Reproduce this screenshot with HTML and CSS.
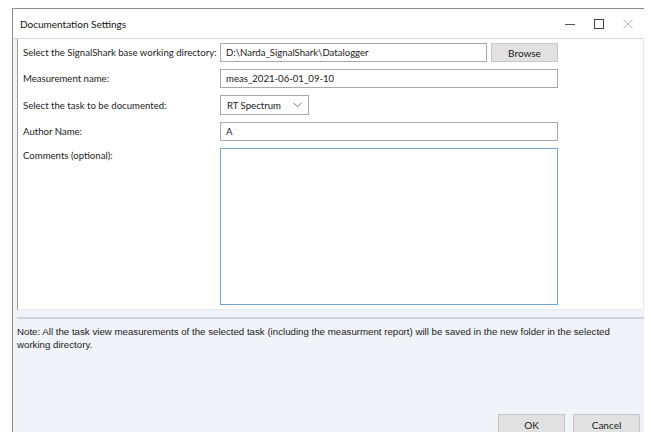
FILE: index.html
```html
<!DOCTYPE html>
<html>
<head>
<meta charset="utf-8">
<link rel="stylesheet" href="styles.css">
</head>
<body>
<div class="window">
  <div class="titlebar">
    <span class="title">Documentation Settings</span>
    <div class="controls">
      <span class="ctl min"><svg width="10" height="10" viewBox="0 0 10 10"><path d="M0 5.5h10" stroke="#555" stroke-width="1"/></svg></span>
      <span class="ctl max"><svg width="10" height="10" viewBox="0 0 10 10"><rect x="0.5" y="0.5" width="9" height="9" fill="none" stroke="#444" stroke-width="1"/></svg></span>
      <span class="ctl close"><svg width="10" height="10" viewBox="0 0 10 10"><path d="M0.5 0.5l9 9M9.5 0.5l-9 9" stroke="#b8b8b8" stroke-width="1"/></svg></span>
    </div>
  </div>
  <div class="panel">
    <div class="form">
      <label class="lbl">Select the SignalShark base working directory:</label>
      <div class="row">
        <div class="input path">D:\Narda_SignalShark\Datalogger</div>
        <button class="btn browse">Browse</button>
      </div>
      <label class="lbl">Measurement name:</label>
      <div class="input full">meas_2021-06-01_09-10</div>
      <label class="lbl">Select the task to be documented:</label>
      <div class="select">RT Spectrum<svg class="chev" width="9" height="6" viewBox="0 0 9 6"><path d="M0.5 0.8l4 4 4-4" fill="none" stroke="#777" stroke-width="1"/></svg></div>
      <label class="lbl">Author Name:</label>
      <div class="input full">A</div>
      <label class="lbl top">Comments (optional):</label>
      <div class="textarea"></div>
    </div>
  </div>
  <div class="footer">
    <p class="note">Note: All the task view measurements of the selected task (including the measurment report) will be saved in the new folder in the selected working directory.</p>
    <div class="actions">
      <button class="btn ok">OK</button>
      <button class="btn cancel">Cancel</button>
    </div>
  </div>
</div>
</body>
</html>
```
FILE: styles.css
```css
html, body {
  margin: 0;
  padding: 0;
  background: #ffffff;
  height: 100%;
  overflow: hidden;
}

.window {
  margin: 8px 0 0 12px;
  width: 631px;
  height: 424px;
  border-top: 1px solid #8c8c8c;
  border-left: 1px solid #8c8c8c;
  background: #f0f3f8;
  display: flex;
  flex-direction: column;
  font-family: "Lato", "Open Sans", sans-serif;
  color: #1a1a1a;
}

.titlebar {
  height: 29px;
  background: #ffffff;
  display: flex;
  align-items: center;
  justify-content: space-between;
  padding-left: 7px;
  border-bottom: 1px solid #d6d6d6;
}

.title {
  font-size: 10px;
  color: #111;
}

.controls {
  display: flex;
  align-items: center;
  gap: 19px;
  padding-right: 11px;
}

.ctl {
  display: flex;
  width: 10px;
  height: 10px;
}

.panel {
  margin-left: 4px;
  background: #ffffff;
  border-left: 1px solid #9a9a9a;
  border-right: 1px solid #e4e4e4;
  border-bottom: 1px solid #e8e8e8;
  height: 266px;
  padding: 4px 0 0 5px;
}

.form {
  display: grid;
  grid-template-columns: 197px 338px;
  row-gap: 7px;
  align-items: center;
  font-size: 9.6px;
}

.lbl {
  color: #222;
  white-space: nowrap;
}

.lbl.top {
  align-self: start;
  padding-top: 2px;
}

.row {
  display: flex;
  gap: 4px;
}

.input {
  height: 19px;
  box-sizing: border-box;
  border: 1px solid #a8a8a8;
  padding: 0 5px;
  line-height: 17px;
  background: #fff;
}

.input.path {
  width: 267px;
}

.input.full {
  width: 338px;
}

.select {
  width: 89px;
  height: 20px;
  box-sizing: border-box;
  border: 1px solid #a8a8a8;
  padding: 0 6px;
  display: flex;
  align-items: center;
  justify-content: space-between;
}

.textarea {
  width: 338px;
  height: 157px;
  box-sizing: border-box;
  border: 1px solid #6fa6d6;
  background: #fff;
}

.btn {
  font-family: "Lato", "Open Sans", sans-serif;
  font-size: 10px;
  color: #1a1a1a;
  background: #e1e1e1;
  border: 1px solid #c6c6c6;
  padding: 0;
  height: 19px;
}

.btn.browse {
  width: 67px;
}

.footer {
  flex: 1;
  display: flex;
  flex-direction: column;
  border-top: 2px solid #cfd3d8;
  margin-top: 7px;
  margin-left: 4px;
}

.note {
  margin: 6px 0 0 0;
  font-family: "Liberation Sans", Arial, sans-serif;
  font-size: 9.7px;
  line-height: 13px;
  color: #1a1a1a;
  width: 610px;
}

.actions {
  margin-top: auto;
  display: flex;
  justify-content: flex-end;
  gap: 8px;
  padding-right: 4px;
}

.btn.ok, .btn.cancel {
  width: 67px;
  height: 22px;
  margin-bottom: -3px;
}
```
